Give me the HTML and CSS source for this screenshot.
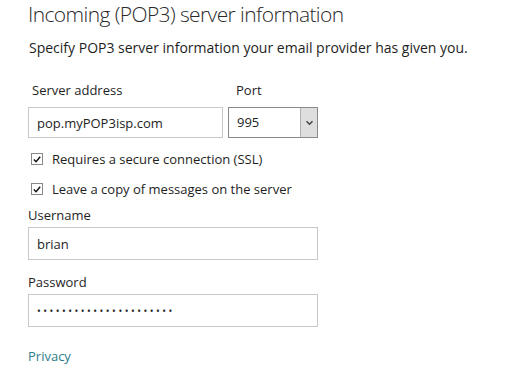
FILE: index.html
```html
<!DOCTYPE html>
<html lang="en">
<head>
    <meta charset="UTF-8">
    <title>Incoming (POP3) server information</title>
    <link rel="stylesheet" href="styles.css">
</head>
<body>
    <div class="page">
        <h1 class="title">Incoming (POP3) server information</h1>
        <p class="intro">Specify POP3 server information your email provider has given you.</p>

        <!-- Server + port row -->
        <div class="server-row">
            <div class="field server-field">
                <label class="row-label" for="server">Server address</label>
                <input class="text-input" type="text" id="server" value="pop.myPOP3isp.com">
            </div>
            <div class="field port-field">
                <label class="row-label">Port</label>
                <div class="select-box">
                    <span class="select-value">995</span>
                    <span class="select-arrow">
                        <svg width="9" height="6" viewBox="0 0 9 6"><path d="M1.5 1.2 L4.5 4.2 L7.5 1.2" fill="none" stroke="#444" stroke-width="1.5"/></svg>
                    </span>
                </div>
            </div>
        </div>

        <!-- Options -->
        <div class="check-row">
            <span class="check-box"><svg width="11" height="11" viewBox="0 0 11 11"><path d="M2 5.5 L4.5 8 L9 2.5" fill="none" stroke="#111" stroke-width="1.6"/></svg></span>
            <span class="check-text">Requires a secure connection (SSL)</span>
        </div>
        <div class="check-row">
            <span class="check-box"><svg width="11" height="11" viewBox="0 0 11 11"><path d="M2 5.5 L4.5 8 L9 2.5" fill="none" stroke="#111" stroke-width="1.6"/></svg></span>
            <span class="check-text">Leave a copy of messages on the server</span>
        </div>

        <div class="field wide user-field">
            <label class="label" for="username">Username</label>
            <input class="text-input" type="text" id="username" value="brian">
        </div>
        <div class="field wide pass-field">
            <label class="label" for="password">Password</label>
            <div class="text-input pass-box"><span class="dots">••••••••••••••••••••••</span></div>
        </div>

        <a class="privacy" href="#">Privacy</a>
    </div>
</body>
</html>
```

FILE: styles.css
```css
/* Base */
body {
    margin: 0;
    background: #ffffff;
    color: #1e1e1e;
    font-family: 'Open Sans', 'Noto Sans', sans-serif;
    font-size: 13px;
}

.page {
    padding: 0 0 0 28px;
    display: flex;
    flex-direction: column;
    align-items: flex-start;
}

.title {
    margin: 0;
    font-size: 21px;
    font-weight: 300;
    line-height: 28px;
    color: #2a2a2a;
    letter-spacing: -0.6px;
}

.intro {
    margin: 10px 0 0 1px;
    font-size: 14px;
    line-height: 19px;
}

/* Fields */
.field {
    display: flex;
    flex-direction: column;
}

.server-row {
    display: flex;
    gap: 5px;
    margin-top: 24px;
}

.row-label {
    margin-left: 4px;
    line-height: 18px;
    margin-bottom: 8px;
}

.port-field .row-label {
    margin-left: 8px;
}

.label {
    line-height: 18px;
    margin-bottom: 3px;
}

.text-input {
    box-sizing: border-box;
    height: 31px;
    border: 1px solid #c8c8c8;
    background: #fff;
    padding: 0 8px;
    font-family: inherit;
    font-size: 13px;
    color: #1e1e1e;
    outline: none;
    margin: 0;
}

.server-field .text-input {
    width: 195px;
}

.user-field {
    margin-top: 2px;
}

.pass-field {
    margin-top: 13px;
}

.wide .text-input {
    width: 290px;
    height: 33px;
}

.pass-box {
    display: flex;
    align-items: center;
}

.dots {
    font-size: 10px;
    letter-spacing: 2.5px;
}

/* Select */
.select-box {
    box-sizing: border-box;
    width: 90px;
    height: 31px;
    border: 1px solid #8a8a8a;
    display: flex;
    align-items: stretch;
}

.select-value {
    flex: 1;
    padding-left: 8px;
    line-height: 29px;
}

.select-arrow {
    width: 16px;
    background: #dedede;
    border-left: 1px solid #b0b0b0;
    display: flex;
    align-items: center;
    justify-content: center;
}

/* Checkboxes */
.check-row {
    display: flex;
    align-items: center;
    margin-left: 3px;
    height: 30px;
}

.server-row + .check-row {
    margin-top: 6px;
}

.check-box {
    box-sizing: border-box;
    width: 12px;
    height: 12px;
    border: 1px solid #888;
    display: flex;
    align-items: center;
    justify-content: center;
    margin-right: 9px;
}

.check-box svg {
    display: block;
}

.privacy {
    margin-top: 20px;
    color: #2d7d8a;
    text-decoration: none;
    line-height: 18px;
}
```
